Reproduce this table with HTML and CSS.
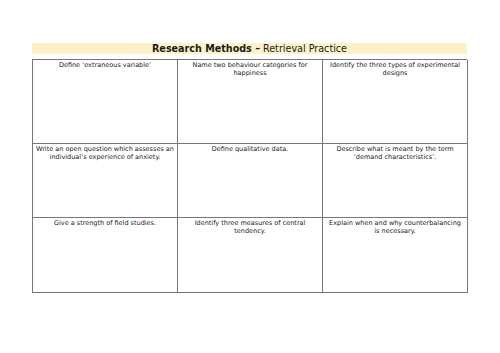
FILE: index.html
```html
<!DOCTYPE html>
<html>
<head>
<meta charset="utf-8">
<link rel="stylesheet" href="styles.css">
</head>
<body>
<div class="page">
  <div class="title"><b>Research Methods –</b> Retrieval Practice</div>
  <div class="grid">
    <div class="cell">Define ‘extraneous variable’</div>
    <div class="cell">Name two behaviour categories for happiness</div>
    <div class="cell">Identify the three types of experimental designs</div>
    <div class="cell">Write an open question which assesses an individual’s experience of anxiety.</div>
    <div class="cell">Define qualitative data.</div>
    <div class="cell">Describe what is meant by the term ‘demand characteristics’.</div>
    <div class="cell">Give a strength of field studies.</div>
    <div class="cell">Identify three measures of central tendency.</div>
    <div class="cell">Explain when and why counterbalancing is necessary.</div>
  </div>
</div>
</body>
</html>
```
FILE: styles.css
```css
html, body {
  margin: 0;
  padding: 0;
  background: #fff;
}
.page {
  width: 435px;
  margin-left: 32px;
  padding-top: 43px;
  font-family: "DejaVu Sans", sans-serif;
  color: #1a1a1a;
}
.title {
  background: #fdf1c9;
  height: 11px;
  line-height: 11px;
  font-size: 9.6px;
  text-align: center;
  margin-bottom: 5px;
}
.title b {
  font-weight: bold;
}
.grid {
  display: grid;
  grid-template-columns: 145px 145px 145px;
  grid-template-rows: 84px 74px 75px;
  border-top: 1px solid #777;
  border-left: 1px solid #777;
}
.cell {
  border-right: 1px solid #777;
  border-bottom: 1px solid #777;
  font-size: 6.5px;
  line-height: 7.5px;
  text-align: center;
  padding: 2px 3px 0;
  box-sizing: border-box;
}
```
